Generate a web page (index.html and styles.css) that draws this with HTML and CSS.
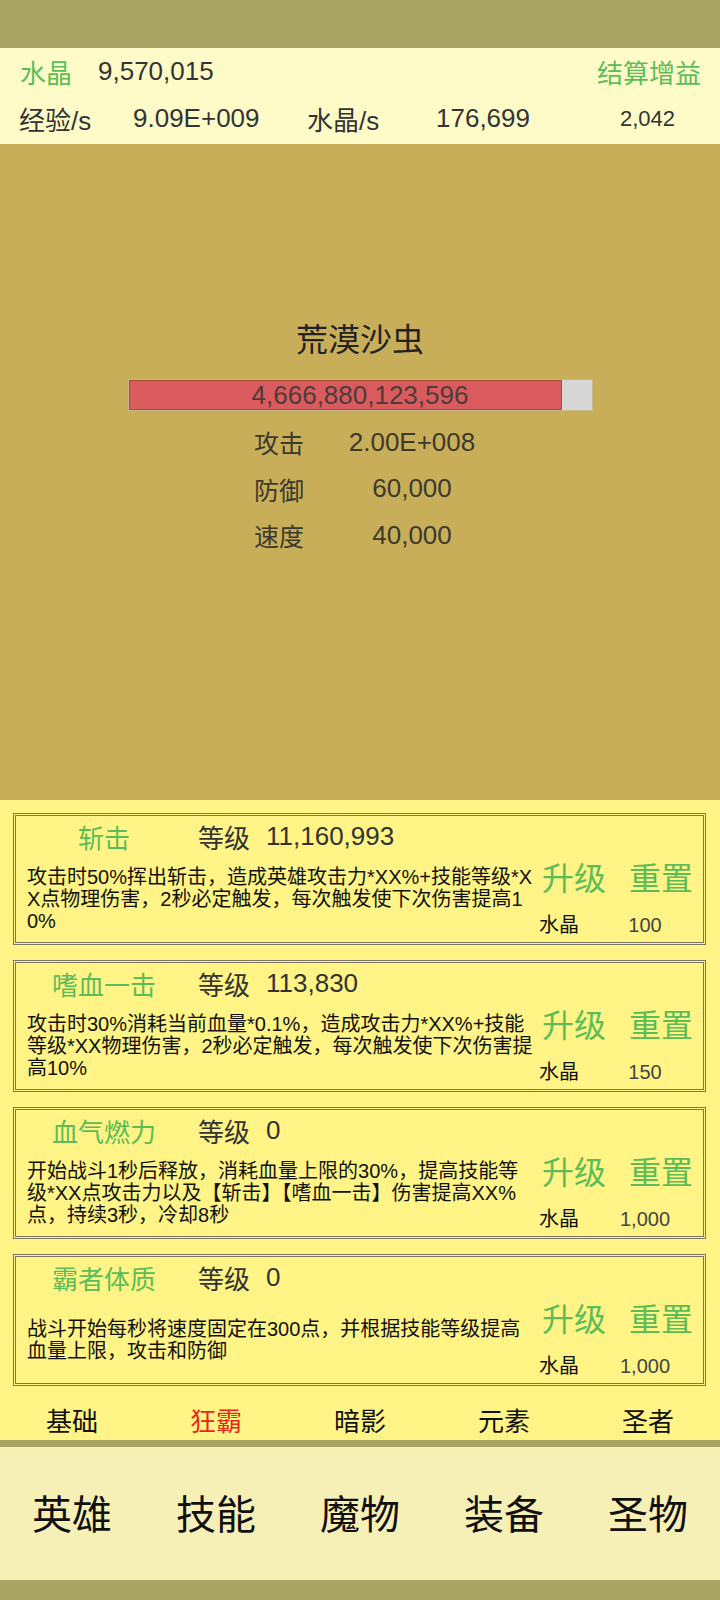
FILE: index.html
```html
<!DOCTYPE html>
<html lang="zh">
<head>
    <meta charset="UTF-8">
    <meta name="viewport" content="width=device-width, initial-scale=1.0">
    <title>技能</title>
    <link rel="stylesheet" href="styles.css">
</head>
<body>
    <div class="topbar"></div>

    <div class="info">
        <div class="info-row">
            <span class="green">水晶</span>
            <span class="crystal">9,570,015</span>
            <span class="green settle">结算增益</span>
        </div>
        <div class="info-row rates">
            <span>经验/s</span>
            <span>9.09E+009</span>
            <span>水晶/s</span>
            <span>176,699</span>
            <span class="small">2,042</span>
        </div>
    </div>

    <div class="arena">
        <div class="monster-name">荒漠沙虫</div>
        <div class="hp">
            <div class="hp-fill" style="width: 93.6%"></div>
            <div class="hp-text">4,666,880,123,596</div>
        </div>
        <div class="stats">
            <span>攻击</span><span class="num">2.00E+008</span>
            <span>防御</span><span class="num">60,000</span>
            <span>速度</span><span class="num">40,000</span>
        </div>
    </div>

    <div class="skills">
        <div class="card">
            <div class="card-head">
                <span class="skill-name">斩击</span>
                <span class="lv">等级</span>
                <span class="lv-num">11,160,993</span>
            </div>
            <div class="card-body">
                <p class="desc">攻击时50%挥出斩击，造成英雄攻击力*XX%+技能等级*XX点物理伤害，2秒必定触发，每次触发使下次伤害提高10%</p>
                <div class="ops">
                    <div class="btns"><span class="btn">升级</span><span class="btn">重置</span></div>
                    <div class="cost"><span class="cost-label">水晶</span><span class="cost-num">100</span></div>
                </div>
            </div>
        </div>

        <div class="card">
            <div class="card-head">
                <span class="skill-name">嗜血一击</span>
                <span class="lv">等级</span>
                <span class="lv-num">113,830</span>
            </div>
            <div class="card-body">
                <p class="desc">攻击时30%消耗当前血量*0.1%，造成攻击力*XX%+技能等级*XX物理伤害，2秒必定触发，每次触发使下次伤害提高10%</p>
                <div class="ops">
                    <div class="btns"><span class="btn">升级</span><span class="btn">重置</span></div>
                    <div class="cost"><span class="cost-label">水晶</span><span class="cost-num">150</span></div>
                </div>
            </div>
        </div>

        <div class="card">
            <div class="card-head">
                <span class="skill-name">血气燃力</span>
                <span class="lv">等级</span>
                <span class="lv-num">0</span>
            </div>
            <div class="card-body">
                <p class="desc">开始战斗1秒后释放，消耗血量上限的30%，提高技能等级*XX点攻击力以及【斩击】【嗜血一击】伤害提高XX%点，持续3秒，冷却8秒</p>
                <div class="ops">
                    <div class="btns"><span class="btn">升级</span><span class="btn">重置</span></div>
                    <div class="cost"><span class="cost-label">水晶</span><span class="cost-num">1,000</span></div>
                </div>
            </div>
        </div>

        <div class="card">
            <div class="card-head">
                <span class="skill-name">霸者体质</span>
                <span class="lv">等级</span>
                <span class="lv-num">0</span>
            </div>
            <div class="card-body">
                <p class="desc">战斗开始每秒将速度固定在300点，并根据技能等级提高血量上限，攻击和防御</p>
                <div class="ops">
                    <div class="btns"><span class="btn">升级</span><span class="btn">重置</span></div>
                    <div class="cost"><span class="cost-label">水晶</span><span class="cost-num">1,000</span></div>
                </div>
            </div>
        </div>

        <ul class="tabs">
            <li>基础</li>
            <li class="active">狂霸</li>
            <li>暗影</li>
            <li>元素</li>
            <li>圣者</li>
        </ul>
    </div>

    <ul class="nav">
        <li>英雄</li>
        <li>技能</li>
        <li>魔物</li>
        <li>装备</li>
        <li>圣物</li>
    </ul>
    <div class="bottombar"></div>
</body>
</html>
```

FILE: styles.css
```css
*{
    box-sizing: border-box;
}
body{
    margin: 0;
    width: 720px;
    font-family: "Liberation Sans", "Noto Sans CJK SC", sans-serif;
    color: #333;
}
ul{
    margin: 0;
    padding: 0;
    list-style: none;
}
.green{
    color: #5cbd58;
}

.topbar{
    height: 48px;
    background: #a9a463;
}

/* 顶部资源栏 */
.info{
    height: 96px;
    background: #fffbc9;
    font-size: 26px;
}
.info-row{
    display: flex;
    align-items: center;
    height: 47px;
    padding: 0 19px 0 20px;
}
.info-row .crystal{
    margin-left: 26px;
}
.info-row .settle{
    margin-left: auto;
}
.rates{
    display: grid;
    grid-template-columns: 114px 174px 129px 184px auto;
    padding-left: 19px;
}
.rates .small{
    font-size: 22px;
}

/* 魔物 */
.arena{
    height: 656px;
    background: #c9ae59;
    padding-top: 176px;
}
.monster-name{
    text-align: center;
    font-size: 32px;
    line-height: 40px;
    color: #222;
}
.hp{
    position: relative;
    width: 465px;
    height: 32px;
    margin: 19px auto 0;
    background: #d7d7d7;
    border: 1px solid #c4b98a;
}
.hp-fill{
    height: 100%;
    background: #d95b5d;
    border: 1px solid #a9502f;
}
.hp-text{
    position: absolute;
    top: 0;
    left: 0;
    right: 0;
    line-height: 30px;
    text-align: center;
    font-size: 26px;
    color: #4d3b3c;
}
.stats{
    display: grid;
    grid-template-columns: 80px 156px;
    grid-auto-rows: 46.5px;
    align-items: center;
    margin: 8px 0 0 254px;
    font-size: 25px;
    color: #3c3a2c;
}
.stats .num{
    text-align: center;
    font-size: 26px;
}

/* 技能列表 */
.skills{
    background: #fff485;
    padding: 13px 14px 0 13px;
    height: 640px;
}
.card{
    height: 132px;
    margin-bottom: 15px;
    border: 3px double #7b7762;
}
.card-head{
    display: flex;
    align-items: center;
    height: 40px;
    font-size: 26px;
}
.skill-name{
    width: 176px;
    text-align: center;
    color: #5cbd58;
}
.lv{
    margin-left: 6px;
    color: #333;
}
.lv-num{
    margin-left: 16px;
    color: #333;
}
.card-body{
    display: flex;
    height: 86px;
}
.desc{
    display: flex;
    align-items: center;
    flex-shrink: 0;
    width: 518px;
    margin: 0;
    padding-left: 11px;
    font-size: 20px;
    line-height: 22px;
    color: #111;
    word-break: break-all;
}
.ops{
    padding-left: 8px;
}
.btns{
    display: flex;
    line-height: 46px;
    font-size: 32px;
    color: #5cbd58;
}
.btn:first-child{
    width: 87px;
}
.cost{
    display: flex;
    margin: 10px 0 0 -3px;
    line-height: 26px;
    font-size: 20px;
}
.cost-label{
    width: 70px;
    color: #111;
}
.cost-num{
    width: 72px;
    text-align: center;
    color: #444;
}

.tabs{
    display: flex;
    margin: 0 -14px 0 -13px;
    padding-top: 7px;
    line-height: 28px;
    font-size: 26px;
    color: #111;
}
.tabs li,
.nav li{
    flex: 1;
    text-align: center;
}
.tabs .active{
    color: #e52a1a;
}

/* 底部导航 */
.nav{
    display: flex;
    align-items: center;
    height: 140px;
    padding-bottom: 4px;
    border-top: 7px solid #a9a463;
    background: #f7f0b6;
    font-size: 40px;
    color: #111;
}
.bottombar{
    height: 20px;
    background: #a9a463;
}
```
